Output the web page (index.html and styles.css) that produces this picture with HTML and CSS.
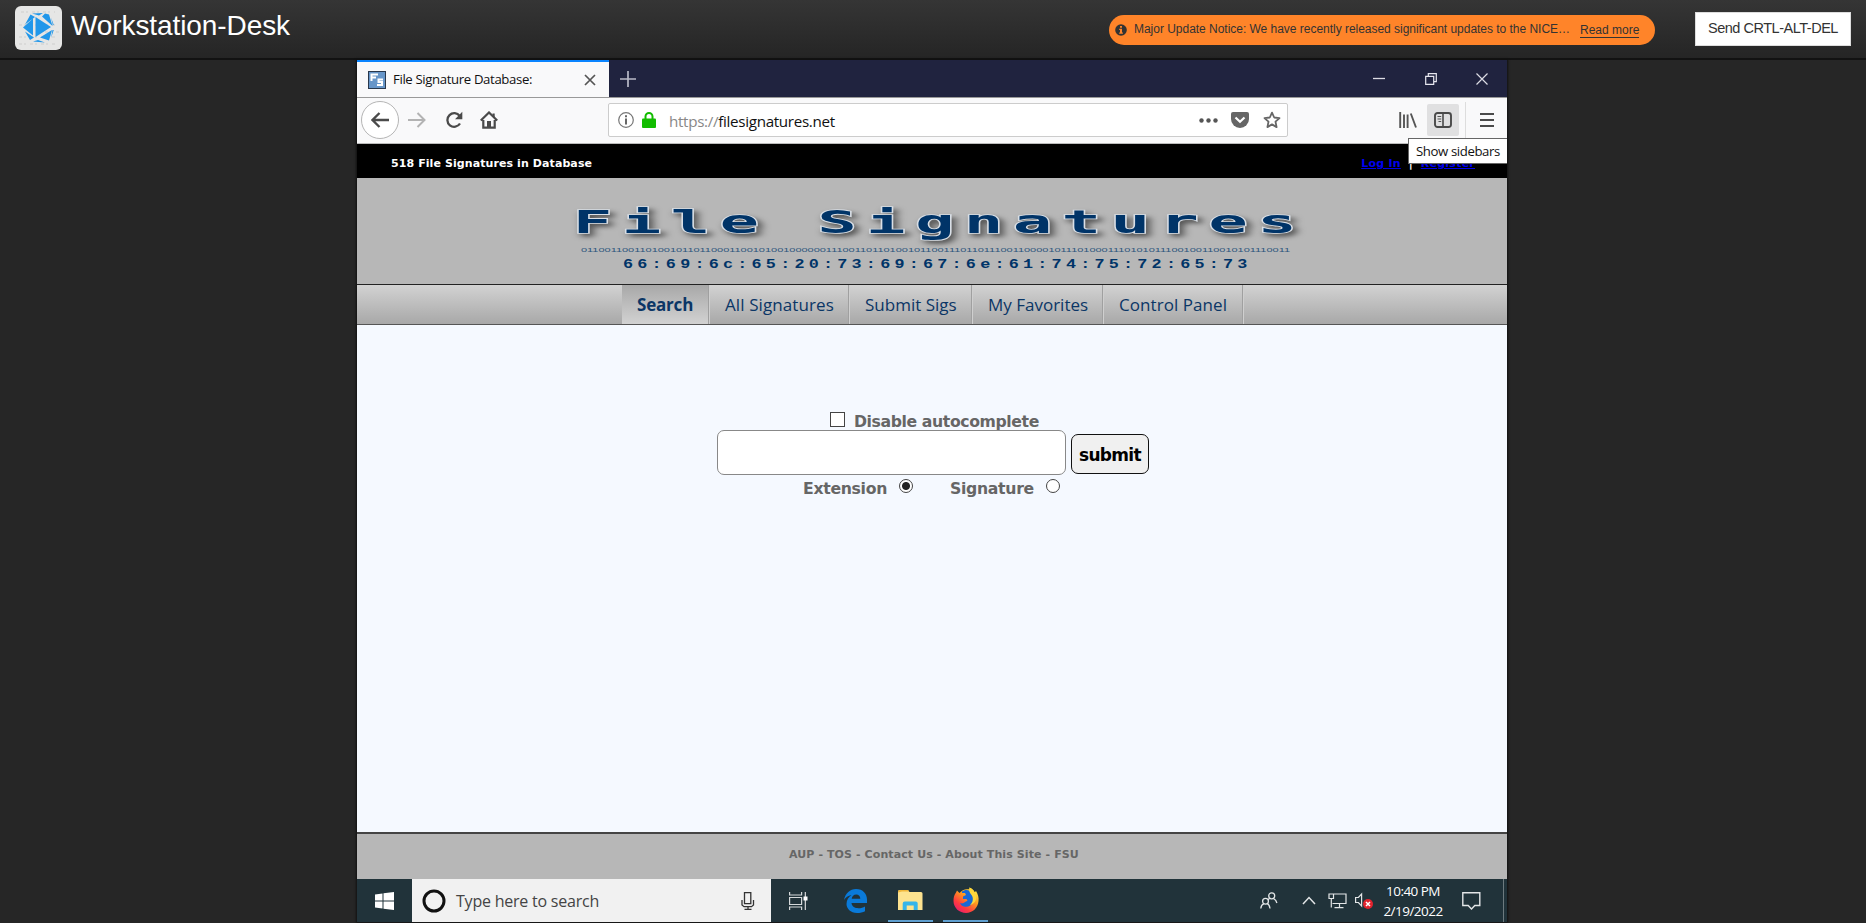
FILE: index.html
```html
<!DOCTYPE html>
<html lang="en">
<head>
<meta charset="utf-8">
<title>Workstation-Desk</title>
<link rel="stylesheet" href="styles.css">
</head>
<body>
<header class="topbar">
  <svg class="brand-logo" width="47" height="44" viewBox="0 0 47 44">
    <rect width="47" height="44" rx="6" fill="#e6e6e5"/>
    <g stroke="#dadad9" stroke-width="2" stroke-dasharray="3 2 2 4" fill="none"><path d="M6 6h34M4 19h38M30 26h14M4 31h38M4 38h38"/></g>
    <path fill="#2197ea" d="M17 7.500L28 7 24 9.500zM30 7.500L34 8.500 37.500 20 27 10.500zM15.500 8.500L20 11 10 18.500zM8 21.500L18 12.500V29.500zM20.500 11L36 21 20.500 31zM10 25.500L19 31.500 15 34zM37 24L34 34.500 25 31.500zM18 35.500L23 34 30 36.500zM36 11.500L38.800 19 37.800 19zM38.800 24L36 32 37.500 24z"/>
  </svg>
  <h1 class="brand">Workstation-Desk</h1>
  <div class="notice">
    <svg width="12" height="12" viewBox="0 0 12 12"><circle cx="6" cy="6" r="5.800" fill="#333"/><path d="M5 2h2v1.800H5zM4.200 4.800H7v3.600h.9v1.300H4.200V8.400H5V6.100h-.8z" fill="#ff8429"/></svg>
    <span class="notice-text">Major Update Notice: We have recently released significant updates to the NICE…</span>
    <a class="notice-link">Read more</a>
  </div>
  <button class="send-keys">Send CRTL-ALT-DEL</button>
</header>
<main class="desktop">
  <div class="tabstrip">
    <div class="tab">
      <svg width="18" height="18" viewBox="0 0 18 18"><rect x=".5" y=".5" width="17" height="17" fill="#6796c9" stroke="#29384c"/><path d="M2.500 3.500H10M3.500 3v7M3.500 6.500H8M15 8.500h-4.500v2.500H14v3H9" fill="none" stroke="#fff" stroke-width="2"/></svg>
      <span class="tab-title">File Signature Database:</span>
      <svg class="tab-close" width="12" height="12" viewBox="0 0 12 12"><path d="M1 1l10 10M11 1L1 11" stroke="#555" stroke-width="1.700"/></svg>
    </div>
    <svg class="tab-new" width="16" height="16" viewBox="0 0 16 16"><path d="M8 0v16M0 8h16" stroke="#b9bac8" stroke-width="1.700"/></svg>
    <div class="window-controls">
      <svg width="12" height="12" viewBox="0 0 12 12"><path d="M0 5.500h12" stroke="#dcdce4" stroke-width="1.300"/></svg>
      <svg width="12" height="12" viewBox="0 0 12 12"><path d="M.7 3.300h8v8h-8zM3.300 3V.7h8v8H9" fill="none" stroke="#e6e6ee" stroke-width="1.200"/></svg>
      <svg width="12" height="12" viewBox="0 0 12 12"><path d="M.5.5l11 11M11.500.5l-11 11" stroke="#dcdce4" stroke-width="1.200"/></svg>
    </div>
  </div>
  <div class="toolbar">
    <span class="back"><svg width="18" height="16" viewBox="0 0 18 16"><path d="M18 8H1.500M8.500 1L1.500 8l7 7" fill="none" stroke="#4a4a4a" stroke-width="2.300"/></svg></span>
    <svg class="forward" width="18" height="16" viewBox="0 0 18 16"><path d="M0 8h16.500M9.500 1l7 7-7 7" fill="none" stroke="#b3b3b3" stroke-width="2"/></svg>
    <svg class="reload" width="18" height="18" viewBox="0 0 18 18"><path d="M14.700 5A6.800 6.800 0 1 0 15 12.500" fill="none" stroke="#4a4a4a" stroke-width="2.300"/><path d="M17.300.8v7.400H10z" fill="#4a4a4a"/></svg>
    <svg class="home" width="18" height="18" viewBox="0 0 18 18"><path d="M.8 9.500L9 1.500l8.200 8M3.300 9v7.700h11.400V9" fill="none" stroke="#4a4a4a" stroke-width="2.200"/><path d="M7 16.500V10h4v6.500zM12.500 2.500h2.200V7l-2.200-2z" fill="#4a4a4a"/></svg>
    <div class="urlbar">
      <svg width="16" height="16" viewBox="0 0 16 16"><circle cx="8" cy="8" r="7.300" fill="none" stroke="#777" stroke-width="1.200"/><path d="M7 6.500h2v6H7zM7 3.300h2v2H7z" fill="#666"/></svg>
      <svg class="lock" width="14" height="16" viewBox="0 0 14 16"><path d="M3.500 8V4.500a3.500 3.500 0 0 1 7 0V8" fill="none" stroke="#12bc00" stroke-width="2"/><rect y="6.500" width="14" height="9.500" rx="1" fill="#12bc00"/></svg>
      <span class="url"><span class="scheme">https://</span>filesignatures.net</span>
      <svg class="dots" width="19" height="5" viewBox="0 0 19 5"><g fill="#555"><circle cx="2.500" cy="2.500" r="2.200"/><circle cx="9.500" cy="2.500" r="2.200"/><circle cx="16.500" cy="2.500" r="2.200"/></g></svg>
      <svg class="pocket" width="18" height="16" viewBox="0 0 18 16"><path d="M2 0h14a2 2 0 0 1 2 2v5a9 9 0 0 1-18 0V2a2 2 0 0 1 2-2z" fill="#666"/><path d="M4.500 5.500L9 9.800l4.500-4.300" fill="none" stroke="#fff" stroke-width="2.200"/></svg>
      <svg class="star" width="18" height="18" viewBox="0 0 18 18"><path d="M9 1.600l2.200 4.900 5.300.6-4 3.600 1.100 5.400L9 13.400l-4.600 2.700 1.100-5.400-4-3.600 5.300-.6z" fill="none" stroke="#666" stroke-width="1.800" stroke-linejoin="round"/></svg>
    </div>
    <svg class="library" width="18" height="16" viewBox="0 0 18 16"><path d="M1.200 0v16M5 2.500V16M8.600 2.500V16M11.800 1.500L17 15.500" stroke="#555" stroke-width="1.900"/></svg>
    <span class="sidebars"><svg width="18" height="16" viewBox="0 0 18 16"><rect x="1" y="1" width="16" height="14" rx="2.500" fill="none" stroke="#4a4a4a" stroke-width="1.900"/><path d="M9 1v14" stroke="#4a4a4a" stroke-width="1.600"/><path d="M3.500 4.500h3.700M3.500 7h3.700M4.500 9.500h2.700" stroke="#555" stroke-width="1.200"/></svg></span>
    <span class="divider"></span>
    <svg class="menu" width="14" height="14" viewBox="0 0 14 14"><path d="M0 1h14M0 7h14M0 13h14" stroke="#4a4a4a" stroke-width="1.900"/></svg>
    <span class="tooltip">Show sidebars</span>
  </div>
  <div class="statusline">
    <span class="count">518 File Signatures in Database</span>
    <span class="account"><a>Log In</a><i>|</i><a>Register</a></span>
  </div>
  <div class="banner">
    <svg width="1150" height="106" viewBox="357 178 1150 106">
      <g class="art-shadow" transform="translate(573 0) scale(2 1)"><text class="art-title" x="0" y="233">File Signatures</text></g>
      <text class="art-bits" x="581" y="251.500" textLength="709" lengthAdjust="spacingAndGlyphs">011001100110100101101100011001010010000001110011011010010110011101101110011000010111010001110101011100100110010101110011</text>
      <g transform="translate(623 0) scale(1.400 1)"><text class="art-hex" x="0" y="268" textLength="446" lengthAdjust="spacing">66:69:6c:65:20:73:69:67:6e:61:74:75:72:65:73</text></g>
    </svg>
  </div>
  <nav class="sitenav">
    <a class="item active">Search</a>
    <a class="item all">All Signatures</a>
    <a class="item submit-sigs">Submit Sigs</a>
    <a class="item favorites">My Favorites</a>
    <a class="item panel">Control Panel</a>
  </nav>
  <section class="page">
    <div class="row auto"><span class="check"></span><span class="auto-label">Disable autocomplete</span></div>
    <div class="row query"><span class="field"></span><button class="submit">submit</button></div>
    <div class="row kinds"><span>Extension</span><span class="radio on"></span><span class="second">Signature</span><span class="radio"></span></div>
  </section>
  <footer class="sitefoot">AUP - TOS - Contact Us - About This Site - FSU</footer>
  <div class="taskbar">
    <span class="start"><svg width="19" height="18" viewBox="0 0 19 18"><path d="M0 2.500L7.500 1.500v7H0zM8.500 1.300L19 0v8.500H8.500zM0 9.500h7.500v7L0 15.500zM8.500 9.500H19V18L8.500 16.700z" fill="#fff"/></svg></span>
    <div class="search">
      <svg width="24" height="24" viewBox="0 0 24 24"><circle cx="12" cy="12" r="10" fill="none" stroke="#111" stroke-width="3"/></svg>
      <span class="search-text">Type here to search</span>
      <svg class="mic" width="14" height="18" viewBox="0 0 14 18"><path d="M3.500.7h6.300v11H3.500zM1 8v5l2 1.700h7.500l2-1.700V8M7 15v2M3.500 17.300h7" fill="none" stroke="#333" stroke-width="1.300"/></svg>
    </div>
    <svg class="taskview" width="19" height="18" viewBox="0 0 19 18"><path d="M.6 0v3h12V0M.6 5.500h12v7H.6zM.6 18v-3h12v3" fill="none" stroke="#d5d9da" stroke-width="1.200"/><path d="M16.300 0v18" stroke="#e8e8e8" stroke-width="1.100"/><path d="M14.500 4.500h4v4h-4z" fill="#fff"/></svg>
    <svg class="edge" width="23" height="24" viewBox="0 0 23 24"><path fill="#0a7ad9" d="M0 11C1.500 4 6 0 12 0c7 0 11 5 11 10.500V14H7.500c.3 3.500 3.500 5.200 7 5.200 2.600 0 4.700-.8 6.500-1.800v4.800c-2 1.200-4.800 1.800-8 1.800C6.500 24 2.500 19.500 2.500 15c0-4 2-7 5-9C4 6.500 1.500 8.500 0 11zm7.700-1.200h8.600c0-2.600-1.500-4.300-4.100-4.300-2.500 0-4.200 1.800-4.500 4.300z"/></svg>
    <span class="app explorer"><svg width="25" height="20" viewBox="0 0 25 20"><path d="M0 1.500Q0 0 1.500 0H10l1.500 2H23q1.500 0 1.500 1.500V20H0z" fill="#fde38f"/><path d="M0 2.500V1.500Q0 0 1.500 0H10l1 1.500H4z" fill="#f1b83b"/><path d="M4.700 20v-6.500q0-2 2-2h11q2 0 2 2V20h-4v-4.500h-7V20z" fill="#35b5ea"/></svg></span>
    <span class="app firefox"><svg width="26" height="26" viewBox="0 0 26 26"><defs><linearGradient id="fx" x1=".85" y1=".05" x2=".2" y2=".95"><stop offset="0" stop-color="#fff04a"/><stop offset=".4" stop-color="#ff9a1f"/><stop offset=".75" stop-color="#ff3b3f"/><stop offset="1" stop-color="#e8206b"/></linearGradient></defs><path d="M3 5.500l1-2 2.500 2.500C9 2.500 13 1.500 17 2.500L16.500.5c3 1 4.500 3 5 5l1.500-1.500C25 7 26 11 25.500 14 25 21 19.500 26 13 26S.5 21 .5 14C.5 10.500 1 8 3 5.500z" fill="url(#fx)"/><path d="M9 4.500c3-2.500 8-2 9.500 1.500 2.500 2.500 3 6 1.500 9-1.500 4-5.500 5.500-9 4.500-2-.5-3.500-2-4-3.500 2 .8 4 .3 5-1l2.500-1.200-1-1.800H10V9.500L13 8 12 6H9z" fill="#1769d6"/><path d="M16.500.5c-1 3 0 5 2 7.500s2 7-1.500 10c5-1 7-6 6-10-.7-3-3-6-6.500-7.500z" fill="#ffd83a"/></svg></span>
    <div class="tray">
      <svg class="people" width="18" height="17" viewBox="0 0 18 17"><g fill="none" stroke="#e3e6e7" stroke-width="1.300"><circle cx="11.700" cy="3.800" r="3"/><path d="M9.500 6.200L8 8.200M13.500 6.500c2 1 3 2.500 3.400 4.500"/><circle cx="5.500" cy="9.300" r="2.900"/><path d="M.8 16.500c.2-2.500 1.500-4.200 3.200-4.900M7.200 11.500c1.500.8 2.500 2.500 2.800 5"/></g></svg>
      <svg class="chevron" width="14" height="9" viewBox="0 0 14 9"><path d="M1 8l6-6.500L13 8" fill="none" stroke="#e3e6e7" stroke-width="1.500"/></svg>
      <svg class="network" width="19" height="16" viewBox="0 0 19 16"><path d="M6 1h12v9.500H4.500M11.500 10.500V14M6.500 14.700h9M1 1h4.500v4.500H1zM3.300 5.500v9" fill="none" stroke="#e3e6e7" stroke-width="1.200"/></svg>
      <svg class="volume" width="18" height="18" viewBox="0 0 18 18"><path d="M.6 5.500h2.800L6.600 2v12L3.400 10.500H.6z" fill="none" stroke="#e3e6e7" stroke-width="1.200"/><circle cx="13" cy="12" r="5" fill="#e2232e"/><path d="M11 10l4 4M15 10l-4 4" stroke="#fff" stroke-width="1.500"/></svg>
      <div class="clock"><span>10:40 PM</span><span>2/19/2022</span></div>
      <svg class="action" width="19" height="18" viewBox="0 0 19 18"><path d="M.8.800h17v12.700h-5l-3.300 3.500-3.300-3.500H.8z" fill="none" stroke="#e3e6e7" stroke-width="1.400"/></svg>
      <span class="peek"></span>
    </div>
  </div>
</main>
</body>
</html>
```

FILE: styles.css
```css
* { box-sizing: border-box; }
body { margin: 0; width: 1866px; height: 923px; overflow: hidden; background: #262626; font-family: "Liberation Sans", sans-serif; }
svg { display: block; flex: none; }
span, a { white-space: nowrap; }

.topbar { display: flex; height: 60px; padding-left: 15px; background: linear-gradient(#353535, #252525); border-bottom: 2px solid #121212; }
.brand-logo { margin-top: 6px; }
.brand { flex: none; width: 1038px; margin: 10px 0 0 9px; font-size: 28px; line-height: 32px; font-weight: 400; letter-spacing: -.09px; color: #fff; white-space: nowrap; }
.notice { display: flex; flex: none; align-items: center; width: 546px; height: 30px; margin-top: 15px; padding-left: 6px; border-radius: 15px; background: #ff8429; color: #333; font-size: 12px; }
.notice-text { width: 446px; margin: -2px 0 0 7px; letter-spacing: -.025px; }
.notice-link { margin-top: 1px; border-bottom: 1px solid #333; line-height: 13px; }
.send-keys { width: 156px; height: 34px; margin: 12px 0 0 40px; padding: 0 0 3px 12px; border: 1px solid #ddd; background: #fff; color: #333; font: 14.500px "Liberation Sans", sans-serif; letter-spacing: -.48px; text-align: left; white-space: nowrap; }

.desktop { display: flex; flex-direction: column; width: 1150px; height: 862px; margin-left: 357px; box-shadow: 0 0 2px 1px #111; font-family: "Open Sans", "Noto Sans", sans-serif; }
.tabstrip { display: flex; align-items: center; height: 37px; background: #20233f; }
.tab { display: flex; align-items: center; width: 252px; height: 37px; padding-left: 11px; background: #f9f9fa; border-top: 2px solid #0a84ff; }
.tab-title { width: 191px; margin: -2px 0 0 7px; font-size: 13.200px; letter-spacing: -.37px; color: #111; }
.tab-new { margin-left: 11px; }
.window-controls { display: flex; gap: 39.500px; margin-left: auto; padding-right: 19px; }

.toolbar { position: relative; display: flex; align-items: center; height: 47px; padding-bottom: 1px; background: #f9f9fa; border-bottom: 1px solid #bbb; border-top: 1px solid #999; }
.back { display: flex; align-items: center; justify-content: center; width: 38px; height: 38px; margin-left: 4px; border: 1px solid #b5b5b5; border-radius: 50%; background: #fff; }
.forward { margin-left: 9px; }
.reload { margin-left: 19px; }
.home { margin-left: 17px; }
.urlbar { display: flex; align-items: center; width: 680px; height: 34px; margin-left: 110px; padding-left: 9px; background: #fff; border: 1px solid #ccc; border-radius: 2px; }
.lock { margin-left: 8px; }
.url { width: 530px; margin-left: 13px; padding-top: 1px; font-size: 15.200px; letter-spacing: -.32px; color: #111; }
.scheme { color: #888; }
.pocket { margin-left: 13px; }
.star { margin-left: 14px; }
.library { margin-left: 111px; }
.sidebars { display: flex; align-items: center; justify-content: center; width: 32px; height: 32px; margin-left: 10px; border-radius: 2px; background: #e0e0e1; }
.divider { width: 1px; height: 37px; margin-left: 6px; background: #ddd; }
.menu { margin-left: 14px; }
.tooltip { position: absolute; right: 0; top: 40px; width: 99px; height: 26px; padding-left: 7px; border: 1px solid #666; border-right: 0; background: #fff; font-size: 13.200px; letter-spacing: -.4px; line-height: 24px; color: #111; }

.statusline { display: flex; justify-content: space-between; height: 34px; padding: 12px 32px 0 34px; background: #000; color: #fff; font: bold 11px/15px "DejaVu Sans", sans-serif; letter-spacing: .09px; }
.account { display: flex; letter-spacing: .24px; }
.account a { color: #0000ee; text-decoration: underline; }
.account i { width: 20px; text-align: center; font-style: normal; }

.banner { height: 106px; background: #b7b7b7; }
.art-shadow { filter: drop-shadow(2px 3px 2px #555); }
.art-title { font: bold 32.500px "DejaVu Sans Mono", monospace; letter-spacing: 4.880px; fill: #003468; stroke: #d9dfe6; stroke-width: 1.600px; paint-order: stroke; }
.art-bits { font: 6px "Liberation Sans", sans-serif; fill: #2e567d; }
.art-hex { font: bold 12px "Liberation Mono", monospace; fill: #003468; }

.sitenav { display: flex; height: 41px; padding-left: 265px; border-top: 1px solid #222; border-bottom: 1px solid #555; background: linear-gradient(#d2d2d2, #a8a8a8); font-size: 17px; line-height: 39px; color: #0b3666; }
.item { padding-left: 15px; border-right: 1px solid #cfcfcf; box-shadow: inset -1px 0 #a0a0a0; }
.active { width: 88px; font-weight: 700; letter-spacing: -.2px; background: linear-gradient(#a8a8a8, #d2d2d2); }
.all { width: 140px; letter-spacing: .1px; }
.submit-sigs { width: 123px; }
.favorites { width: 131px; }
.panel { width: 140px; letter-spacing: .06px; }

.page { height: 507px; padding-top: 86px; background: #f5f9ff; color: #666; font: bold 15.700px "DejaVu Sans", sans-serif; letter-spacing: -.31px; }
.row { display: flex; }
.auto { height: 19px; padding-left: 473px; }
.auto-label { padding-top: 1px; letter-spacing: -.4px; }
.check { width: 15px; height: 15px; margin: 1px 9px 0 0; border: 1px solid #444; background: #fff; }
.query { height: 46px; padding-left: 360px; }
.field { width: 349px; height: 45px; border: 1px solid #888; border-radius: 7px; background: #fff; }
.submit { width: 78px; height: 40px; margin: 4px 0 0 5px; padding: 2px 0 0 7px; border: 1px solid #111; border-radius: 7px; background: #f0f0f0; color: #000; text-align: left; font: bold 17px "DejaVu Sans", sans-serif; letter-spacing: -.7px; }
.kinds { padding-left: 446px; line-height: 25px; }
.radio { width: 14px; height: 14px; margin: 3px 0 0 12px; border: 1px solid #444; border-radius: 50%; background: #fff; }
.on { background: radial-gradient(circle, #222 3.500px, #fff 4.500px); }
.second { margin-left: 37px; }

.sitefoot { height: 47px; padding: 13px 0 0 432px; border-top: 2px solid #444; background: #b7b7b7; color: #666; font: bold 11px/15px "DejaVu Sans", sans-serif; letter-spacing: .1px; }

.taskbar { display: flex; align-items: center; height: 43px; background: #21333a; }
.start { width: 55px; padding-left: 18px; }
.search { display: flex; align-items: center; width: 359px; height: 43px; padding-left: 10px; background: #f1f1f1; font-size: 16px; color: #444; }
.search-text { width: 285px; margin-left: 10px; padding-top: 1px; letter-spacing: -.22px; }
.taskview { margin-left: 18px; }
.edge { margin-left: 36px; }
.app { display: flex; align-items: center; justify-content: center; width: 45px; height: 43px; border-bottom: 2px solid #5f9fd0; }
.explorer { margin-left: 21px; }
.firefox { margin-left: 10px; }
.tray { display: flex; align-items: center; height: 43px; margin-left: auto; color: #fff; }
.chevron { margin-left: 24px; }
.network { margin-left: 12px; }
.volume { margin-left: 8px; }
.clock { display: flex; flex-direction: column; align-items: center; width: 60px; margin-left: 10px; font-size: 13.500px; letter-spacing: -.53px; line-height: 20px; }
.action { margin-left: 19px; }
.peek { width: 1px; height: 43px; margin: 0 3px 0 22px; background: #6d7a7e; }
```
